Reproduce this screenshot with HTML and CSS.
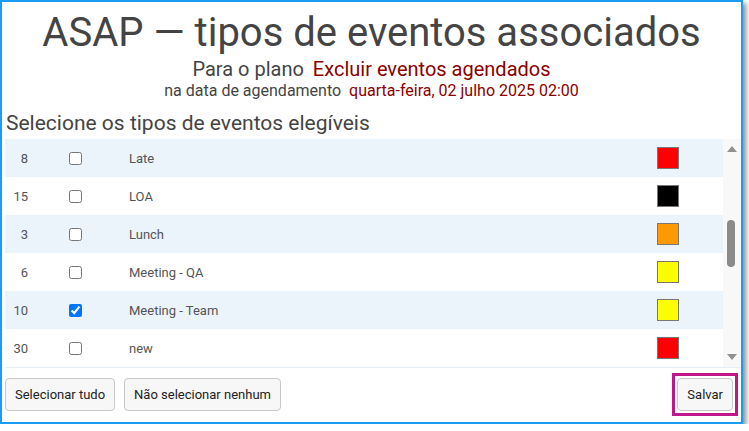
FILE: index.html
```html
<!DOCTYPE html>
<html lang="pt">
<head>
    <meta charset="UTF-8">
    <title>ASAP - tipos de eventos associados</title>
    <link rel="stylesheet" href="styles.css">
</head>
<body>

    <div class="dialog">
        <h1 class="title">ASAP — tipos de eventos associados</h1>
        <p class="plan">Para o plano <span class="hl">Excluir eventos agendados</span></p>
        <p class="when">na data de agendamento <span class="hl">quarta-feira, 02 julho 2025 02:00</span></p>

        <h2 class="section">Selecione os tipos de eventos elegíveis</h2>

        <!-- Event type list -->
        <div class="list-wrap">
            <div class="list">
                <div class="row alt">
                    <span class="num">8</span>
                    <input type="checkbox" class="chk">
                    <span class="label">Late</span>
                    <span class="swatch" style="background:#ff0000"></span>
                </div>
                <div class="row">
                    <span class="num">15</span>
                    <input type="checkbox" class="chk">
                    <span class="label">LOA</span>
                    <span class="swatch" style="background:#000000"></span>
                </div>
                <div class="row alt">
                    <span class="num">3</span>
                    <input type="checkbox" class="chk">
                    <span class="label">Lunch</span>
                    <span class="swatch" style="background:#ff9900"></span>
                </div>
                <div class="row">
                    <span class="num">6</span>
                    <input type="checkbox" class="chk">
                    <span class="label">Meeting - QA</span>
                    <span class="swatch" style="background:#ffff00"></span>
                </div>
                <div class="row alt">
                    <span class="num">10</span>
                    <input type="checkbox" class="chk" checked>
                    <span class="label">Meeting - Team</span>
                    <span class="swatch" style="background:#ffff00"></span>
                </div>
                <div class="row">
                    <span class="num">30</span>
                    <input type="checkbox" class="chk">
                    <span class="label">new</span>
                    <span class="swatch" style="background:#ff0000"></span>
                </div>
            </div>
            <div class="scrollbar">
                <span class="arrow up"></span>
                <span class="thumb"></span>
                <span class="arrow down"></span>
            </div>
        </div>

        <!-- Buttons -->
        <div class="actions">
            <button class="btn">Selecionar tudo</button>
            <button class="btn">Não selecionar nenhum</button>
            <span class="highlight"><button class="btn">Salvar</button></span>
        </div>
    </div>

</body>
</html>
```

FILE: styles.css
```css
/* Event types dialog */
body {
    margin: 0;
    background: #fff;
    font-family: Roboto, "Liberation Sans", sans-serif;
}

.dialog {
    box-sizing: border-box;
    width: 743px;
    height: 424px;
    border: 2px solid #1a9cf0;
    box-shadow: 3px 3px 5px rgba(0, 0, 0, 0.45);
    display: flex;
    flex-direction: column;
}

.title {
    margin: 7px 0 0;
    font-size: 40px;
    line-height: 48px;
    font-weight: 400;
    color: #444;
    text-align: center;
}

.plan {
    margin: 1px 0 0;
    font-size: 20px;
    line-height: 23px;
    color: #444;
    text-align: center;
}

.when {
    margin: 0;
    font-size: 16px;
    line-height: 20px;
    color: #444;
    text-align: center;
}

.hl {
    color: #8b0000;
    margin-left: 4px;
}

.section {
    margin: 9px 0 0;
    padding-left: 4px;
    font-size: 21px;
    line-height: 26px;
    font-weight: 400;
    color: #444;
}

.list-wrap {
    display: flex;
    margin: 3px 0 0 3px;
    height: 228px;
    border-bottom: 1px solid #e6eef6;
}

.list {
    flex: 1;
    overflow: hidden;
}

.row {
    display: flex;
    align-items: center;
    height: 38px;
    font-size: 13px;
    color: #555;
}

.row.alt {
    background: #ebf3fb;
}

.num {
    width: 23px;
    text-align: right;
}

.chk {
    margin: 1px 0 0 41px;
    width: 13px;
    height: 13px;
}

.label {
    flex: 1;
    margin-left: 47px;
}

.swatch {
    box-sizing: border-box;
    width: 22px;
    height: 22px;
    border: 1px solid #777;
    margin-right: 44px;
}

.scrollbar {
    width: 18px;
    background: #f8f8f8;
    position: relative;
}

.arrow {
    position: absolute;
    left: 4px;
    width: 0;
    height: 0;
    border-left: 5px solid transparent;
    border-right: 5px solid transparent;
}

.arrow.up {
    top: 7px;
    border-bottom: 6px solid #909090;
}

.arrow.down {
    bottom: 7px;
    border-top: 6px solid #909090;
}

.thumb {
    position: absolute;
    left: 4px;
    top: 81px;
    width: 8px;
    height: 47px;
    border-radius: 4px;
    background: #8a8a8a;
}

.actions {
    display: flex;
    align-items: flex-start;
    gap: 9px;
    padding: 10px 0 0 3px;
}

.btn {
    font-family: Roboto, "Liberation Sans", sans-serif;
    font-size: 13px;
    color: #222;
    background: #f7f7f7;
    border: 1px solid #c8c8c8;
    border-radius: 4px;
    height: 33px;
    padding: 0 9px;
}

.highlight {
    display: flex;
    margin: -5px 3px 0 auto;
    padding: 2px;
    border: 3px solid #c0168c;
}
```
